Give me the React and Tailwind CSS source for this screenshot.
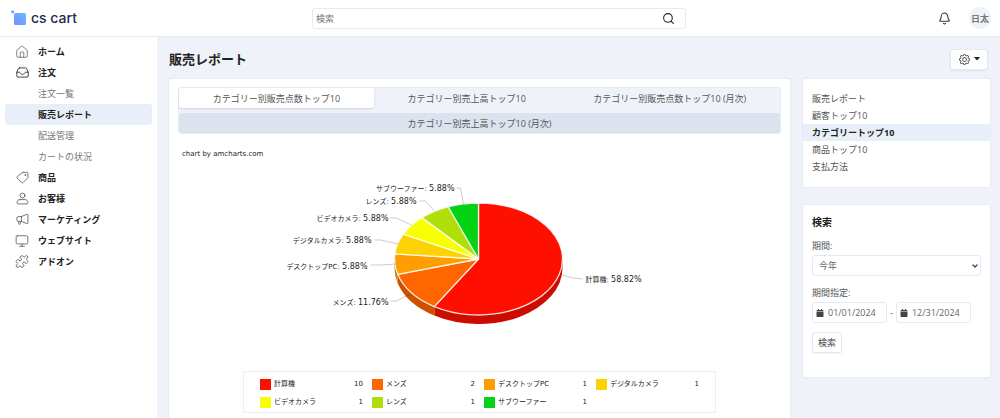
import React, { useState } from 'react';
import { Search, House, Monitor, Puzzle, Bell, ChevronDown } from 'lucide-react';
import { BsGear } from 'react-icons/bs';
import { FaCalendar } from 'react-icons/fa';

const slices = [
  { name: '計算機', value: 10, percent: '58.82%', color: '#ff0f00', side: '#cc0c00', line: '323,123 333,126 343,127', label: [346, 130], anchor: 'start' },
  { name: 'メンズ', value: 2, percent: '11.76%', color: '#ff6600', side: '#cc5200', line: '171,142 157,149 151,149', label: [149, 153], anchor: 'end' },
  { name: 'デスクトップPC', value: 1, percent: '5.88%', color: '#ff9e01', side: '#cc7e01', line: '156,112 141,113 131,113', label: [128, 117], anchor: 'end' },
  { name: 'デジタルカメラ', value: 1, percent: '5.88%', color: '#fcd202', side: '#caa802', line: '159,92 141,88 135,88', label: [132, 91], anchor: 'end' },
  { name: 'ビデオカメラ', value: 1, percent: '5.88%', color: '#f8ff01', side: '#c6cc01', line: '172,73 157,66 151,66', label: [149, 69], anchor: 'end' },
  { name: 'レンズ', value: 1, percent: '5.88%', color: '#b0de09', side: '#8db207', line: '195,59 186,49 180,49', label: [177, 52], anchor: 'end' },
  { name: 'サブウーファー', value: 1, percent: '5.88%', color: '#04d215', side: '#03a811', line: '224,53 221,36 217,36', label: [215, 39], anchor: 'end' },
];

const tabs = [
  'カテゴリー別販売点数トップ10',
  'カテゴリー別売上高トップ10',
  'カテゴリー別販売点数トップ10 (月次)',
  'カテゴリー別売上高トップ10 (月次)',
];

const reports = ['販売レポート', '顧客トップ10', 'カテゴリートップ10', '商品トップ10', '支払方法'];

const LineIcon = ({ children }) => (
  <svg className="h-[13px] w-[13px]" viewBox="0 0 24 24" fill="none" stroke="currentColor" strokeWidth="1.7" strokeLinecap="round" strokeLinejoin="round">
    {children}
  </svg>
);

const InboxIcon = () => (
  <LineIcon>
    <path d="M6.500 3.500h11q1.500 0 2.200 1.400l2.800 6.600v7q0 2-2 2h-17q-2 0-2-2v-7l2.800-6.600q.7-1.400 2.200-1.400z" />
    <path d="M1.500 11.500h5c1.500 0 1.500 4 5.500 4s4-4 5.500-4h5" />
  </LineIcon>
);

const TagIcon = () => (
  <LineIcon>
    <path d="M13 2.500h7q2 0 2 2v7q0 1-.8 1.800l-8 8q-1.400 1.200-2.800 0l-8-8q-1.200-1.400 0-2.800l8.800-7.200q.8-.8 1.800-.8z" />
    <circle cx="17" cy="7.500" r=".8" />
  </LineIcon>
);

const UserIcon = () => (
  <LineIcon>
    <circle cx="12" cy="6.500" r="4.500" />
    <path d="M7 14h10c3 0 5 2.500 5 5.500q0 2.500-2 2.500h-16q-2 0-2-2.500c0-3 2-5.500 5-5.500z" />
  </LineIcon>
);

const MegaphoneIcon = () => (
  <LineIcon>
    <path d="M10 6.500l10-4q2-.5 2 1.500v14q0 2-2 1.500l-10-4h-5.500q-3 0-3-3v-3q0-3 3-3z" />
    <path d="M10 6.500v9M5 15.500v4q0 1.500 1.500 1.500t1.500-1.500v-4" />
  </LineIcon>
);

const menu = [
  { name: 'ホーム', icon: <House size={14} strokeWidth={1.4} /> },
  { name: '注文', icon: <InboxIcon />, dark: true, items: ['注文一覧', '販売レポート', '配送管理', 'カートの状況'] },
  { name: '商品', icon: <TagIcon /> },
  { name: 'お客様', icon: <UserIcon /> },
  { name: 'マーケティング', icon: <MegaphoneIcon /> },
  { name: 'ウェブサイト', icon: <Monitor size={14} strokeWidth={1.5} /> },
  { name: 'アドオン', icon: <Puzzle size={15} strokeWidth={1.6} /> },
];

const Header = () => (
  <header className="flex h-[37px] items-center border-b border-[#e6ebf5] bg-white">
    <a href="#" className="flex w-[157px] shrink-0 items-center gap-1 pl-[11px]">
      <svg width="16" height="16" viewBox="0 0 16 16">
        <defs>
          <linearGradient id="logo" x1="0" y1="1" x2="1" y2="0">
            <stop offset="0" stopColor="#7d8cff" />
            <stop offset="1" stopColor="#66bbff" />
          </linearGradient>
        </defs>
        <circle cx="1.700" cy="1.800" r="1.600" fill="#6ea3ff" />
        <rect x="3" y="3" width="12" height="12" rx="1.500" fill="url(#logo)" />
      </svg>
      <span className="font-['Inter',sans-serif] text-[14px] leading-4 font-medium text-[#222b4a]">cs cart</span>
    </a>
    <div className="flex flex-1 justify-center">
      <label className="flex h-[21px] w-[374px] items-center rounded-[3px] border border-[#e6eaf5] pr-[10px] pl-[3px]">
        <input type="search" aria-label="検索" placeholder="検索" className="min-w-0 flex-1 text-[9px] outline-none placeholder:text-[#777]" />
        <Search size={13} strokeWidth={2} className="text-[#222]" />
      </label>
    </div>
    <div className="flex w-[159px] shrink-0 items-center justify-end gap-[18px] pr-[9px]">
      <button aria-label="通知" className="text-[#333]"><Bell size={13} strokeWidth={1.9} /></button>
      <button className="h-[22px] w-[22px] rounded-full bg-[#eff3f9] text-[9px] font-bold text-[#777]">日太</button>
    </div>
  </header>
);

const Sidebar = () => (
  <nav className="w-[157px] shrink-0 bg-white px-[5px] pt-1">
    {menu.map(item => (
      <div key={item.name}>
        <a href="#" className="flex h-[21px] items-center gap-[9px] pl-[10px] font-bold text-[#222]">
          <span className={item.dark ? 'flex w-[14px] justify-center text-[#333]' : 'flex w-[14px] justify-center text-[#666]'}>{item.icon}</span>
          {item.name}
        </a>
        {item.items && item.items.map(sub => (
          <a
            key={sub}
            href="#"
            className={sub === '販売レポート'
              ? 'flex h-[21px] items-center rounded-[3px] bg-[#e8eff8] pl-[33px] font-bold text-[#222]'
              : 'flex h-[21px] items-center pl-[33px] text-[#777]'}
          >
            {sub}
          </a>
        ))}
      </div>
    ))}
  </nav>
);

const CX = 239;
const CY = 107;
const RX = 84;
const RY = 56;
const DEPTH = 9;

const point = (share) => {
  const angle = share * Math.PI * 2;
  return [CX + RX * Math.sin(angle), CY - RY * Math.cos(angle)];
};

const PieChart = () => {
  const total = slices.reduce((sum, s) => sum + s.value, 0);
  let start = 0;
  const parts = slices.map(s => {
    const end = start + s.value / total;
    const part = { ...s, start, end };
    start = end;
    return part;
  });

  // only the front half of the rim is visible
  const rims = parts
    .map(p => ({ ...p, from: Math.max(p.start, 0.25), to: Math.min(p.end, 0.75) }))
    .filter(p => p.from < p.to);

  return (
    <svg className="h-[208px] w-full" viewBox="0 11 480 208">
      {rims.map(p => {
        const [x1, y1] = point(p.from);
        const [x2, y2] = point(p.to);
        return (
          <path
            key={p.name}
            fill={p.side}
            d={`M${x1} ${y1}A${RX} ${RY} 0 0 1 ${x2} ${y2}V${y2 + DEPTH}A${RX} ${RY} 0 0 0 ${x1} ${y1 + DEPTH}Z`}
          />
        );
      })}
      {parts.map(p => {
        const [x1, y1] = point(p.start);
        const [x2, y2] = point(p.end);
        const large = p.end - p.start > 0.5 ? 1 : 0;
        return (
          <path
            key={p.name}
            fill={p.color}
            stroke="#fff"
            strokeWidth="1.300"
            strokeOpacity="0.8"
            strokeLinejoin="round"
            d={`M${CX} ${CY}L${x1} ${y1}A${RX} ${RY} 0 ${large} 1 ${x2} ${y2}Z`}
          />
        );
      })}
      {parts.map(p => (
        <g key={p.name}>
          <polyline points={p.line} fill="none" stroke="#000" strokeOpacity="0.2" />
          <text x={p.label[0]} y={p.label[1]} textAnchor={p.anchor} className="fill-[#222] text-[7px]">
            {p.name}: <tspan className="text-[8px]">{p.percent}</tspan>
          </text>
        </g>
      ))}
    </svg>
  );
};

const Legend = () => (
  <ul className="mx-auto grid w-[473px] max-w-full grid-cols-4 gap-y-[6px] border border-[#eee] pt-[6px] pr-[7px] pb-1 pl-[16px] text-[7px] leading-3 text-[#222]">
    {slices.map(s => (
      <li key={s.name} className="flex items-center gap-[3px] pr-[9px]">
        <svg width="11" height="11"><rect width="11" height="11" fill={s.color} /></svg>
        <span className="flex-1 whitespace-nowrap">{s.name}</span>
        <span>{s.value}</span>
      </li>
    ))}
  </ul>
);

const tabClass = (active, i) => {
  if (active) return 'h-5 grow rounded-[3px] bg-white px-4 shadow-sm';
  if (i === 3) return 'h-5 grow rounded-[3px] bg-[#dce2ee] px-4';
  return 'h-5 grow rounded-[3px] px-4';
};

const DateField = ({ id, label, value, onChange }) => (
  <div className="flex h-[21px] w-[75px] items-center gap-1 rounded-[3px] border border-[#e2e8f4] pl-[3px]">
    <FaCalendar size={8} className="shrink-0 text-[#444]" />
    <input
      id={id}
      type="text"
      aria-label={label}
      value={value}
      onChange={e => onChange(e.target.value)}
      className="w-full min-w-0 text-[9px] text-[#666] outline-none"
    />
  </div>
);

const App = () => {
  const [tab, setTab] = useState(tabs[0]);
  const [period, setPeriod] = useState('今年');
  const [from, setFrom] = useState('01/01/2024');
  const [to, setTo] = useState('12/31/2024');

  return (
    <div className="flex min-h-screen flex-col bg-[#eff3f9] font-['Open_Sans','Noto_Sans_CJK_JP',sans-serif] text-[9px] leading-[17px] text-[#555]">
      <Header />
      <div className="flex flex-1">
        <Sidebar />
        <main className="flex min-w-0 flex-1 flex-col pr-[9px] pl-[11px]">
          <div className="flex h-[41px] items-center justify-between pt-[3px]">
            <h1 className="pl-[1px] text-[13px] font-bold text-[#222]">販売レポート</h1>
            <button aria-label="設定" className="mr-[3px] flex h-[21px] w-[38px] items-center justify-center gap-1 rounded-[3px] border border-[#e2e8f4] bg-white text-[#222] shadow-xs">
              <BsGear size={11} />
              <svg width="6" height="4"><path d="M0 0h6l-3 3.500z" fill="currentColor" /></svg>
            </button>
          </div>
          <div className="flex flex-1 gap-[11px]">
            <section className="min-w-0 flex-1 rounded-t-[3px] border border-b-0 border-[#e6ebf5] bg-white px-[9px] pt-2">
              <div className="flex flex-wrap gap-y-[5px] rounded-[3px] border border-[#e6ebf5] bg-[#eff3f9]">
                {tabs.map((name, i) => (
                  <button key={name} onClick={() => setTab(name)} className={tabClass(name === tab, i)}>
                    {name}
                  </button>
                ))}
              </div>
              <div className="font-['DejaVu_Sans','Noto_Sans_CJK_JP',sans-serif]">
                <a href="#" className="mt-3 block h-[17px] pl-1 text-[7px] text-[#222]">chart by amcharts.com</a>
                <PieChart />
                <Legend />
              </div>
            </section>

            <aside className="flex w-[189px] shrink-0 flex-col gap-4">
              <div className="rounded-[3px] border border-[#e6ebf5] bg-white pt-[11px] pb-3">
                {reports.map(name => (
                  <a
                    key={name}
                    href="#"
                    className={name === 'カテゴリートップ10'
                      ? 'block bg-[#e8eff8] px-[9px] font-bold text-[#222]'
                      : 'block px-[9px]'}
                  >
                    {name}
                  </a>
                ))}
              </div>
              <form className="rounded-[3px] border border-[#e6ebf5] bg-white px-[9px] pt-[9px] pb-6" onSubmit={e => e.preventDefault()}>
                <h2 className="text-[10px] font-bold text-[#222]">検索</h2>
                <label htmlFor="period" className="mt-[6px] block">期間:</label>
                <div className="relative mt-[1px]">
                  <select
                    id="period"
                    value={period}
                    onChange={e => setPeriod(e.target.value)}
                    className="block h-[21px] w-full appearance-none rounded-[3px] border border-[#e2e8f4] bg-white pl-[6px] text-[#666]"
                  >
                    <option>今年</option>
                    <option>今月</option>
                  </select>
                  <ChevronDown size={8} strokeWidth={4} className="pointer-events-none absolute top-[7px] right-[2px] text-[#444]" />
                </div>
                <label htmlFor="from" className="mt-2 block">期間指定:</label>
                <div className="mt-[1px] flex items-center gap-[3px]">
                  <DateField id="from" label="期間指定" value={from} onChange={setFrom} />
                  -
                  <DateField id="to" label="終了日" value={to} onChange={setTo} />
                </div>
                <button className="mt-[9px] h-[21px] rounded-[3px] border border-[#e2e8f4] bg-white px-[5px] text-[#444] shadow-xs">検索</button>
              </form>
            </aside>
          </div>
        </main>
      </div>
    </div>
  );
};

export default App;
